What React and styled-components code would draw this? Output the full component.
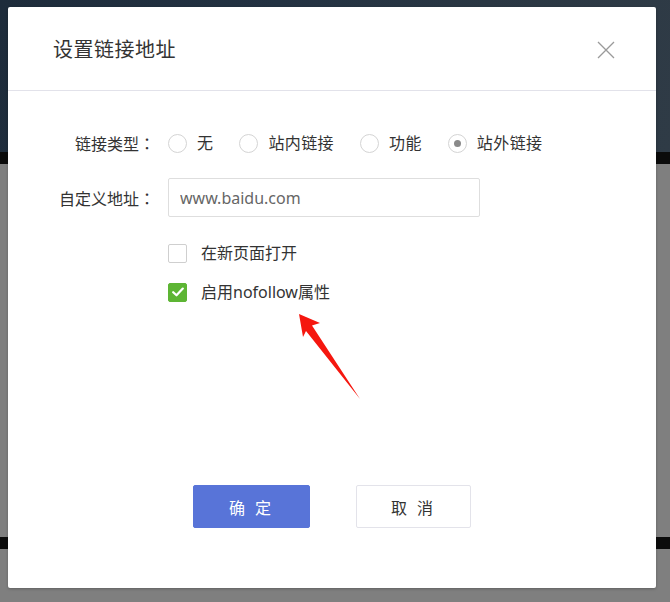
import { useState } from "react";
import styled, { createGlobalStyle } from "styled-components";

const GlobalStyle = createGlobalStyle`
  * { box-sizing: border-box; }
  body {
    margin: 0;
    background: #7f7f7f;
    font-family: "Noto Sans", "Noto Sans CJK SC", sans-serif;
  }
`;

const linkTypes = ["无", "站内链接", "功能", "站外链接"];

function App() {
  const [linkType, setLinkType] = useState("站外链接");
  const [url, setUrl] = useState("www.baidu.com");
  const [newPage, setNewPage] = useState(false);
  const [nofollow, setNofollow] = useState(true);

  return (
    <Page>
      <GlobalStyle />
      <Hero />
      <DarkBar />
      <GrayArea />
      <DarkBar />
      <GrayArea $grow />

      <Dialog>
        <Header>
          <Title>设置链接地址</Title>
          <CloseButton aria-label="关闭">
            <svg width="18" height="18" viewBox="0 0 18 18">
              <path d="M1 1L17 17M17 1L1 17" stroke="#9a9a9a" strokeWidth="1.3" fill="none" />
            </svg>
          </CloseButton>
        </Header>

        <Body>
          <Row $height={36}>
            <Label>链接类型：</Label>
            <RadioGroup>
              {linkTypes.map((t) => (
                <RadioOption key={t} onClick={() => setLinkType(t)}>
                  <RadioCircle $checked={linkType === t} />
                  <span>{t}</span>
                </RadioOption>
              ))}
            </RadioGroup>
          </Row>

          <Row $height={39} $gap={17}>
            <Label>自定义地址：</Label>
            <Input value={url} onChange={(e) => setUrl(e.target.value)} />
          </Row>

          <Row $height={26} $gap={23}>
            <Label />
            <CheckOption onClick={() => setNewPage(!newPage)}>
              <CheckBox $checked={newPage}>{newPage && <CheckMark />}</CheckBox>
              <span>在新页面打开</span>
            </CheckOption>
          </Row>

          <Row $height={26} $gap={13}>
            <Label />
            <CheckOption onClick={() => setNofollow(!nofollow)}>
              <CheckBox $checked={nofollow}>{nofollow && <CheckMark />}</CheckBox>
              <span>启用nofollow属性</span>
            </CheckOption>
          </Row>
        </Body>

        <Footer>
          <PrimaryButton>确 定</PrimaryButton>
          <GhostButton>取 消</GhostButton>
        </Footer>

        <Arrow width="80" height="100" viewBox="0 0 80 100">
          <polygon points="9,9 30,18 22,20.5 70,94 16,26 13,32" fill="#f5170f" />
        </Arrow>
      </Dialog>
    </Page>
  );
}

function CheckMark() {
  return (
    <svg width="12" height="10" viewBox="0 0 12 10">
      <path d="M1.2 5.2L4.5 8.3L10.8 1.6" stroke="#fff" strokeWidth="2.2" fill="none" strokeLinecap="round" strokeLinejoin="round" />
    </svg>
  );
}

const Page = styled.div`
  position: relative;
  height: 602px;
  overflow: hidden;
  display: flex;
  flex-direction: column;
`;

const Hero = styled.div`
  height: 152px;
  background: linear-gradient(100deg, #1e2c3b 0%, #233242 40%, #2a3743 70%, #2f3b46 100%);
`;

const DarkBar = styled.div`
  height: 12px;
  background: #0b0b0b;
`;

const GrayArea = styled.div`
  height: ${(p) => (p.$grow ? "auto" : "373px")};
  flex: ${(p) => (p.$grow ? 1 : "none")};
  background: #7f7f7f;
`;

const Dialog = styled.div`
  position: absolute;
  left: 8px;
  top: 7px;
  width: 648px;
  height: 581px;
  background: #fff;
  border-radius: 2px;
  box-shadow: 0 1px 3px rgba(0, 0, 0, 0.25);
  display: flex;
  flex-direction: column;
`;

const Header = styled.div`
  height: 84px;
  padding: 2px 41px 0 45px;
  display: flex;
  align-items: center;
  justify-content: space-between;
  border-bottom: 1px solid #e2e2ea;
`;

const Title = styled.h2`
  margin: 0;
  font-size: 20px;
  font-weight: 400;
  color: #333;
  line-height: 1;
  letter-spacing: 0.5px;
`;

const CloseButton = styled.button`
  border: none;
  background: none;
  padding: 0;
  width: 18px;
  height: 18px;
  cursor: pointer;
  display: flex;
`;

const Body = styled.div`
  padding-top: 34px;
  display: flex;
  flex-direction: column;
`;

const Row = styled.div`
  display: flex;
  align-items: center;
  height: ${(p) => p.$height}px;
  margin-top: ${(p) => p.$gap || 0}px;
`;

const Label = styled.label`
  width: 147px;
  margin-right: 13px;
  text-align: right;
  font-family: "Noto Sans CJK JP", "Noto Sans CJK SC", sans-serif;
  font-size: 16px;
  color: #333;
  line-height: 1;
  white-space: nowrap;
`;

const RadioGroup = styled.div`
  display: flex;
  align-items: center;
  gap: 26px;
`;

const RadioOption = styled.div`
  display: flex;
  align-items: center;
  gap: 10px;
  font-size: 16px;
  color: #333;
  line-height: 1;
  letter-spacing: 0.4px;
  cursor: pointer;
`;

const RadioCircle = styled.span`
  width: 19px;
  height: 19px;
  border: 1px solid #d4d4d4;
  border-radius: 50%;
  display: flex;
  align-items: center;
  justify-content: center;
  &::after {
    content: "";
    width: 7px;
    height: 7px;
    border-radius: 50%;
    background: #8a8a8a;
    display: ${(p) => (p.$checked ? "block" : "none")};
  }
`;

const Input = styled.input`
  width: 312px;
  height: 39px;
  border: 1px solid #dedede;
  border-radius: 2px;
  padding: 0 11px;
  font-family: "Noto Sans", "Noto Sans CJK SC", sans-serif;
  font-size: 16px;
  color: #666;
  outline: none;
`;

const CheckOption = styled.div`
  display: flex;
  align-items: center;
  gap: 14px;
  font-size: 16px;
  color: #333;
  line-height: 1;
  cursor: pointer;
`;

const CheckBox = styled.span`
  width: 19px;
  height: 19px;
  border-radius: 2px;
  border: 1px solid ${(p) => (p.$checked ? "#5db534" : "#cfcfcf")};
  background: ${(p) => (p.$checked ? "#5db534" : "#fff")};
  display: flex;
  align-items: center;
  justify-content: center;
`;

const Footer = styled.div`
  margin-top: auto;
  padding-bottom: 60px;
  display: flex;
  justify-content: center;
  gap: 46px;
`;

const BaseButton = styled.button`
  width: 117px;
  height: 43px;
  border-radius: 2px;
  font-family: "Noto Sans", "Noto Sans CJK SC", sans-serif;
  font-size: 16px;
  letter-spacing: 3px;
  cursor: pointer;
`;

const PrimaryButton = styled(BaseButton)`
  background: #5874d8;
  border: 1px solid #5874d8;
  color: #fff;
`;

const GhostButton = styled(BaseButton)`
  width: 115px;
  background: #fff;
  border: 1px solid #e3e3ea;
  color: #333;
`;

const Arrow = styled.svg`
  position: absolute;
  left: 282px;
  top: 298px;
`;

export default App;
